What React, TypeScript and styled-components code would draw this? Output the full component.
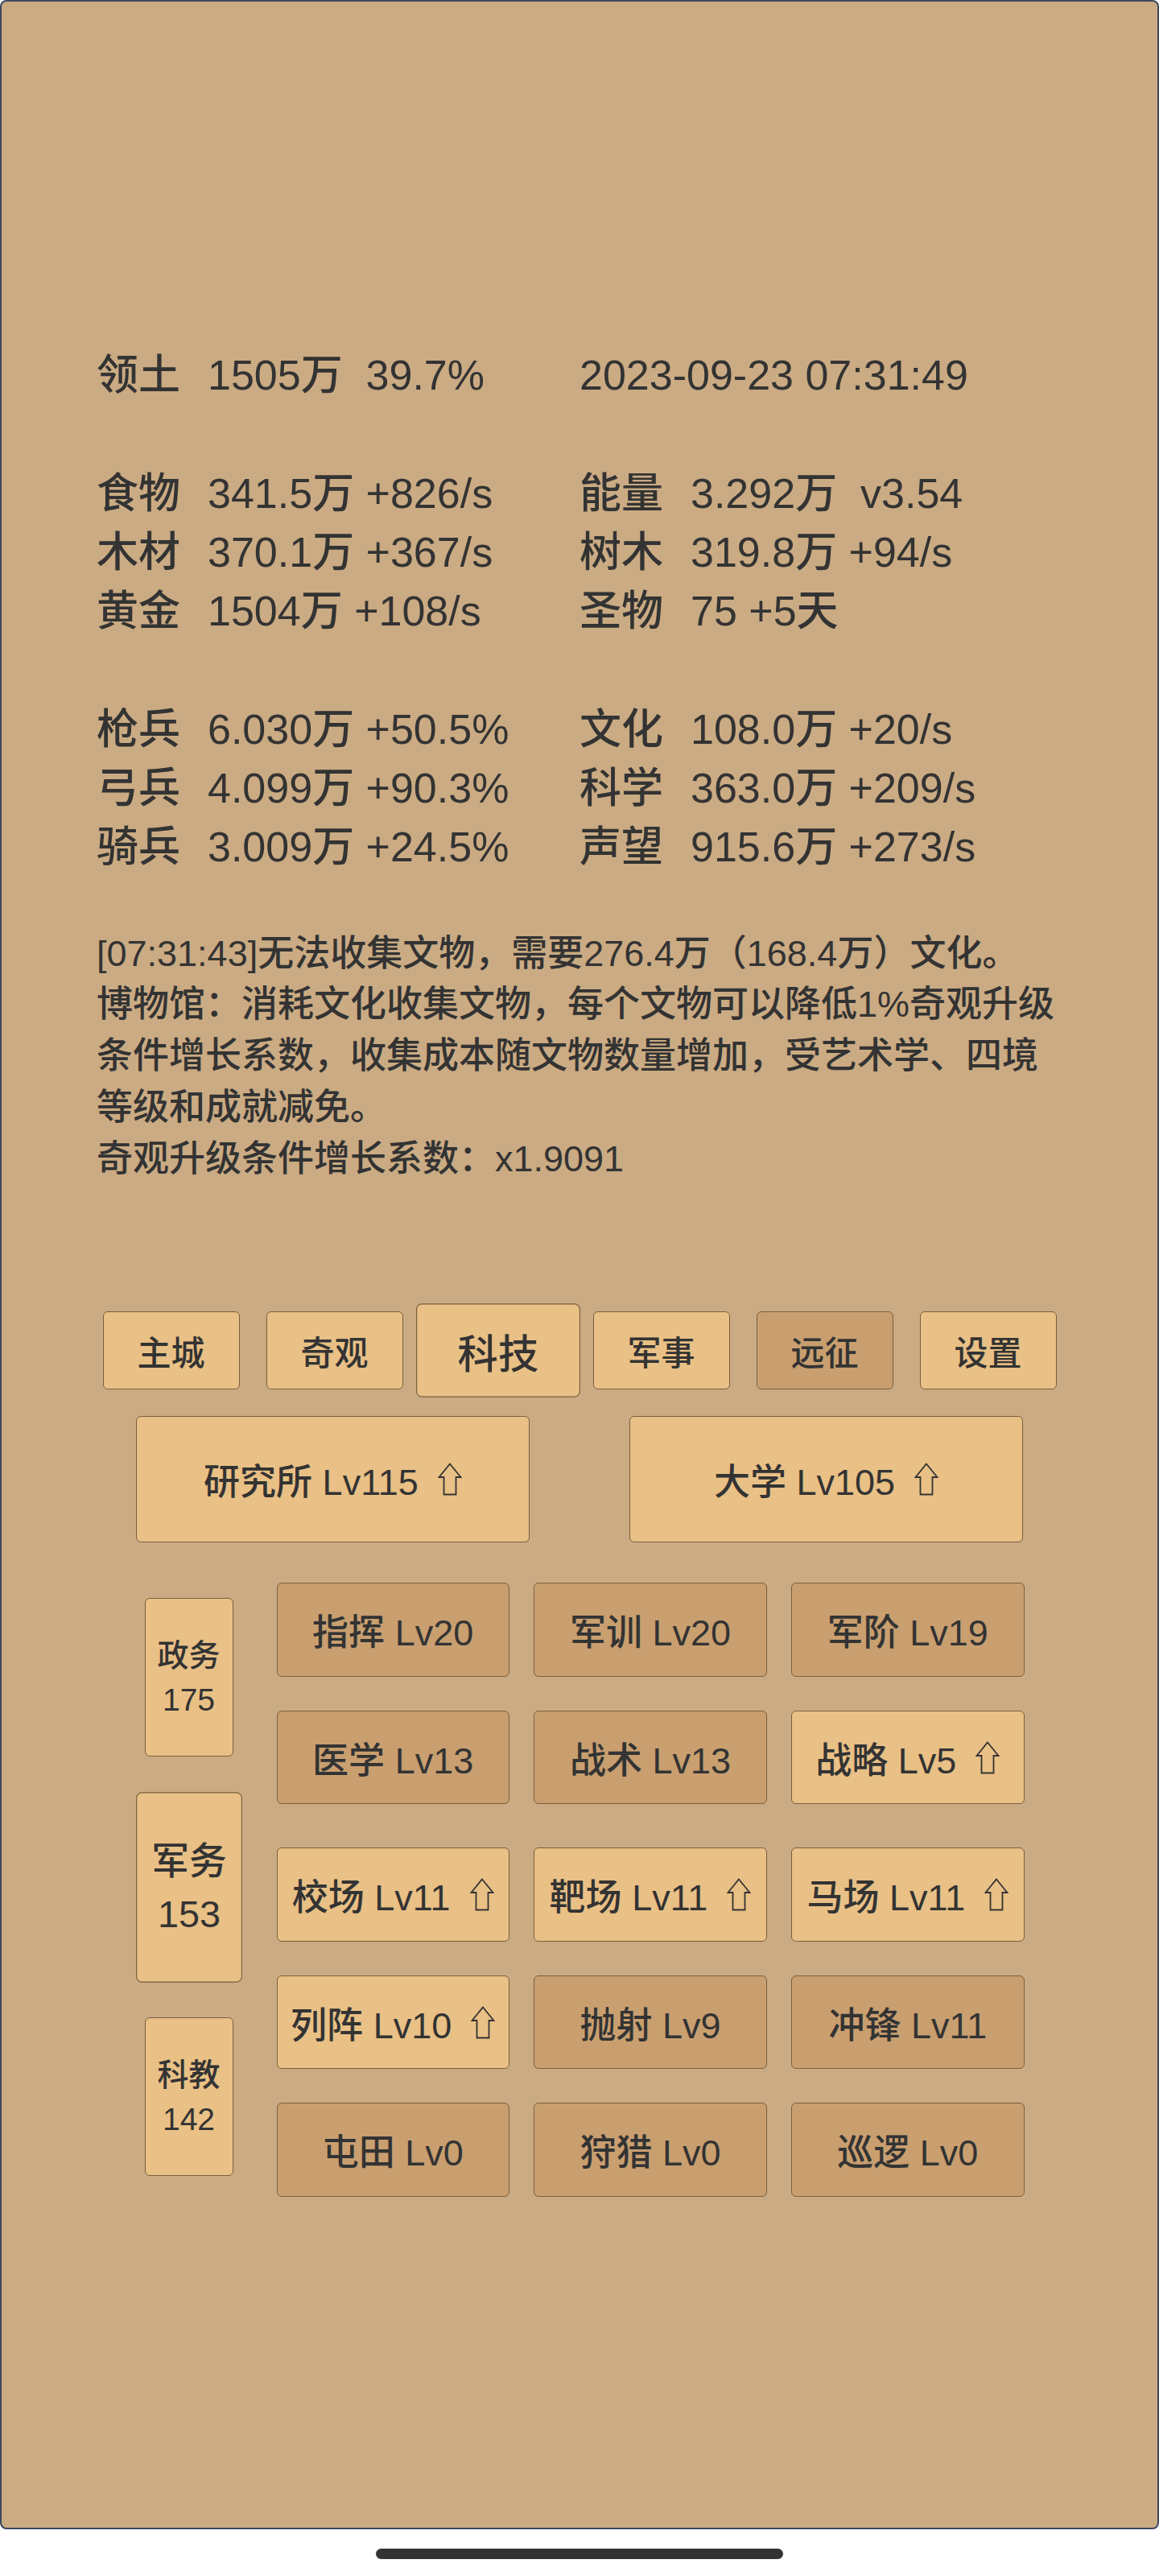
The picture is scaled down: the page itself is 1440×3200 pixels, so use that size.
import React from "react";
import styled, { createGlobalStyle, css } from "styled-components";

const GlobalStyle = createGlobalStyle`
  html, body {
    margin: 0;
    padding: 0;
    background: #fff;
  }
  body {
    font-family: "Liberation Sans", "Noto Sans CJK SC", sans-serif;
    font-weight: 500;
    color: #333;
  }
`;

type Stat = { label?: string; value: string } | null;

const leftStats: Stat[] = [
  { label: "领土", value: "1505万  39.7%" },
  null,
  { label: "食物", value: "341.5万 +826/s" },
  { label: "木材", value: "370.1万 +367/s" },
  { label: "黄金", value: "1504万 +108/s" },
  null,
  { label: "枪兵", value: "6.030万 +50.5%" },
  { label: "弓兵", value: "4.099万 +90.3%" },
  { label: "骑兵", value: "3.009万 +24.5%" },
];

const rightStats: Stat[] = [
  { value: "2023-09-23 07:31:49" },
  null,
  { label: "能量", value: "3.292万  v3.54" },
  { label: "树木", value: "319.8万 +94/s" },
  { label: "圣物", value: "75 +5天" },
  null,
  { label: "文化", value: "108.0万 +20/s" },
  { label: "科学", value: "363.0万 +209/s" },
  { label: "声望", value: "915.6万 +273/s" },
];

const tabs = [
  { name: "主城" },
  { name: "奇观" },
  { name: "科技", active: true },
  { name: "军事" },
  { name: "远征", dark: true },
  { name: "设置" },
];

const sideTabs = [
  { name: "政务", count: 175 },
  { name: "军务", count: 153, active: true },
  { name: "科教", count: 142 },
];

type Skill = { name: string; lv: number; up?: boolean };

const skillGroups: Skill[][] = [
  [
    { name: "指挥", lv: 20 },
    { name: "军训", lv: 20 },
    { name: "军阶", lv: 19 },
    { name: "医学", lv: 13 },
    { name: "战术", lv: 13 },
    { name: "战略", lv: 5, up: true },
  ],
  [
    { name: "校场", lv: 11, up: true },
    { name: "靶场", lv: 11, up: true },
    { name: "马场", lv: 11, up: true },
    { name: "列阵", lv: 10, up: true },
    { name: "抛射", lv: 9 },
    { name: "冲锋", lv: 11 },
    { name: "屯田", lv: 0 },
    { name: "狩猎", lv: 0 },
    { name: "巡逻", lv: 0 },
  ],
];

function UpArrow() {
  return (
    <ArrowSvg viewBox="0 0 30 41" width="30" height="41">
      <polygon
        points="15,1.5 28.5,18 22.5,18 22.5,39.5 7.5,39.5 7.5,18 1.5,18"
        fill="none"
        stroke="#333"
        strokeWidth="1.8"
      />
    </ArrowSvg>
  );
}

function StatColumn({ rows }: { rows: Stat[] }) {
  return (
    <div>
      {rows.map((row, i) => (
        <StatRow key={i}>
          {row?.label && <Label>{row.label}</Label>}
          {row?.value}
        </StatRow>
      ))}
    </div>
  );
}

export default function App() {
  return (
    <Screen>
      <GlobalStyle />
      <Panel>
        <Stats>
          <StatColumn rows={leftStats} />
          <StatColumn rows={rightStats} />
        </Stats>

        <Message>
          [07:31:43]无法收集文物，需要276.4万（168.4万）文化。
          <br />
          博物馆：消耗文化收集文物，每个文物可以降低1%奇观升级条件增长系数，收集成本随文物数量增加，受艺术学、四境等级和成就减免。
          <br />
          奇观升级条件增长系数：x1.9091
        </Message>

        <TabBar>
          {tabs.map((t) => (
            <Tab key={t.name} $dark={t.dark} $active={t.active}>
              {t.name}
            </Tab>
          ))}
        </TabBar>

        <BigRow>
          <BigButton>
            研究所 Lv115
            <UpArrow />
          </BigButton>
          <BigButton>
            大学 Lv105
            <UpArrow />
          </BigButton>
        </BigRow>

        <Lower>
          <SideColumn>
            {sideTabs.map((s) => (
              <SideTab key={s.name} $active={s.active}>
                <span>{s.name}</span>
                <span>{s.count}</span>
              </SideTab>
            ))}
          </SideColumn>
          <SkillArea>
            {skillGroups.map((group, gi) => (
              <SkillGrid key={gi}>
                {group.map((s) => (
                  <SkillButton key={s.name} $dark={!s.up}>
                    {s.name} Lv{s.lv}
                    {s.up && <UpArrow />}
                  </SkillButton>
                ))}
              </SkillGrid>
            ))}
          </SkillArea>
        </Lower>
      </Panel>
      <HomeBar />
    </Screen>
  );
}

const Screen = styled.div`
  width: 1440px;
  height: 3200px;
  display: flex;
  flex-direction: column;
  align-items: center;
  overflow: hidden;
`;

const Panel = styled.main`
  box-sizing: border-box;
  width: 1440px;
  height: 3142px;
  flex-shrink: 0;
  border: 2px solid #3b4862;
  border-radius: 8px;
  background: #cbab83;
  padding: 428px 118px 0;
  display: flex;
  flex-direction: column;
`;

const HomeBar = styled.div`
  width: 506px;
  height: 13px;
  border-radius: 7px;
  background: #333;
  margin-top: 24px;
`;

const Stats = styled.section`
  display: grid;
  grid-template-columns: 1fr 1fr;
  font-size: 52px;
  line-height: 73.3px;
`;

const StatRow = styled.div`
  height: 73.3px;
  white-space: pre;
`;

const Label = styled.span`
  display: inline-block;
  width: 138px;
`;

const Message = styled.p`
  margin: 63px 0 0;
  font-size: 45px;
  line-height: 63.75px;
`;

const tile = css<{ $dark?: boolean }>`
  box-sizing: border-box;
  display: flex;
  align-items: center;
  justify-content: center;
  padding: 0;
  margin: 0;
  font-family: inherit;
  font-weight: 500;
  color: #333;
  background: ${(p) => (p.$dark ? "#c99f6f" : "#e9c085")};
  border: 1.5px solid #7a5f3e;
  border-radius: 6px;
`;

const TabBar = styled.nav`
  margin-top: 158px;
  display: flex;
  justify-content: center;
  gap: 33px;
`;

const Tab = styled.button<{ $dark?: boolean; $active?: boolean }>`
  ${tile}
  width: 170px;
  height: 97px;
  font-size: 42px;
  transform: ${(p) => (p.$active ? "scale(1.2)" : "none")};
`;

const BigRow = styled.div`
  margin-top: 33px;
  display: flex;
  justify-content: center;
  gap: 124px;
`;

const BigButton = styled.button<{ $dark?: boolean }>`
  ${tile}
  width: 489px;
  height: 157px;
  font-size: 45px;
`;

const ArrowSvg = styled.svg`
  margin-left: 24px;
  flex-shrink: 0;
`;

const Lower = styled.div`
  margin-top: 50px;
  display: flex;
  justify-content: center;
  align-items: flex-start;
  gap: 42px;
`;

const SideColumn = styled.div`
  width: 134px;
  padding-top: 19px;
  display: flex;
  flex-direction: column;
  align-items: center;
  gap: 63.5px;
`;

const SideTab = styled.button<{ $dark?: boolean; $active?: boolean }>`
  ${tile}
  flex-direction: column;
  width: 110px;
  height: 197px;
  font-size: 39px;
  line-height: 55px;
  transform: ${(p) => (p.$active ? "scale(1.2)" : "none")};
`;

const SkillArea = styled.div`
  width: 929px;
  display: flex;
  flex-direction: column;
  gap: 54px;
`;

const SkillGrid = styled.div`
  display: grid;
  grid-template-columns: repeat(3, 1fr);
  column-gap: 30.5px;
  row-gap: 42px;
`;

const SkillButton = styled.button<{ $dark?: boolean }>`
  ${tile}
  height: 116.5px;
  font-size: 45px;
  white-space: nowrap;
`;
